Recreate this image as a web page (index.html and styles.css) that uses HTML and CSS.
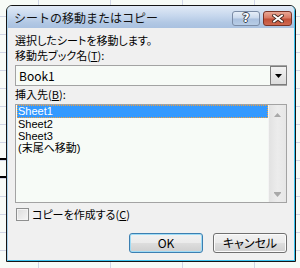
FILE: index.html
```html
<!DOCTYPE html>
<html>
	<head>
		<meta charset="UTF-8">
		<title>シートの移動またはコピー</title>
		<link rel="stylesheet" href="styles.css">
	</head>
	<body>
		<div class="cell-sel"></div>

		<div class="dialog">
			<div class="frame">
				<div class="titlebar">
					<span class="title">シートの移動またはコピー</span>
					<div class="caption-btns">
						<div class="cbtn help">?</div>
						<div class="cbtn close">
							<svg width="12" height="9" viewBox="0 0 12 9">
								<path d="M2 1.5 L10 7.5 M10 1.5 L2 7.5" stroke="#4a2a22" stroke-width="3.6" stroke-linecap="square"/>
								<path d="M2 1.5 L10 7.5 M10 1.5 L2 7.5" stroke="#fff" stroke-width="1.8" stroke-linecap="square"/>
							</svg>
						</div>
					</div>
				</div>

				<div class="client">
					<p class="msg">選択したシートを移動します。</p>
					<p class="label">移動先ブック名(<u>T</u>):</p>
					<div class="combo">
						<span class="combo-text">Book1</span>
						<div class="combo-btn">
							<svg width="7" height="4" viewBox="0 0 7 4"><path d="M0 0 H7 L3.5 4 Z" fill="#000"/></svg>
						</div>
					</div>

					<p class="label list-label">挿入先(<u>B</u>):</p>
					<div class="listbox">
						<ul class="items">
							<li class="sel">Sheet1</li>
							<li>Sheet2</li>
							<li>Sheet3</li>
							<li>(末尾へ移動)</li>
						</ul>
						<div class="vscroll">
							<svg width="7" height="4" viewBox="0 0 7 4"><path d="M3.5 0 L7 4 H0 Z" fill="#a8a8a8"/></svg>
							<svg width="7" height="5" viewBox="0 0 7 5"><path d="M0 0 H7 V1 H0 Z M0 1 H7 L3.5 5 Z" fill="#a8a8a8"/></svg>
						</div>
					</div>

					<div class="check">
						<span class="box"></span>
						<span>コピーを作成する(<u>C</u>)</span>
					</div>

					<div class="buttons">
						<div class="btn default">OK</div>
						<div class="btn">キャンセル</div>
					</div>
				</div>
			</div>
		</div>
	</body>
</html>
```

FILE: styles.css
```css
html,body{
	margin:0;
	padding:0;
}
body{
	width:300px;
	height:268px;
	overflow:hidden;
	position:relative;
	background-color:#f7fbf7;
	background-image:
		linear-gradient(to right, #d0d6e6 1px, transparent 1px),
		linear-gradient(to bottom, #d0d6e6 1px, transparent 1px);
	background-size:72px 100%, 100% 18px;
	background-position:38px 0, 0 16px;
	font-family:"Noto Sans CJK JP", sans-serif;
}
/* selected cell on the sheet behind */
.cell-sel{
	position:absolute;
	left:-40px;
	top:158px;
	width:60px;
	height:16px;
	border:2px solid #000;
}

.dialog{
	position:relative;
	z-index:1;
	margin:5px 0 0 6px;
	width:290px;
	height:257px;
	box-sizing:border-box;
	border:1px solid #151515;
	border-radius:6px 6px 0 0;
}
.frame{
	height:100%;
	box-sizing:border-box;
	border-left:1px solid #a9d4ec;
	border-right:1px solid #3ac2ee;
	border-bottom:1px solid #3ac2ee;
	border-radius:5px 5px 0 0;
	overflow:hidden;
	display:flex;
	flex-direction:column;
}

.titlebar{
	height:22px;
	flex:none;
	display:flex;
	align-items:center;
	justify-content:space-between;
	padding:0 2px 0 6px;
	background:linear-gradient(to bottom, #e1eaf6 0%, #c6d7ed 45%, #b2c8e4 75%, #a9c1e0 100%);
}
.title{
	font-size:12px;
	line-height:14px;
	color:#111;
	margin-top:1px;
}
.caption-btns{
	display:flex;
	gap:3px;
	margin-top:2px;
}
.cbtn{
	height:15px;
	box-sizing:border-box;
	border-radius:3px;
	display:flex;
	align-items:center;
	justify-content:center;
}
.help{
	width:28px;
	border:1px solid #7b8ca6;
	background:linear-gradient(to bottom, #e6eef8 0%, #c9d8ec 48%, #a9c0de 52%, #b8cde6 100%);
	color:#fff;
	font-family:"DejaVu Sans", sans-serif;
	font-weight:bold;
	font-size:12px;
	line-height:13px;
	text-shadow:1px 0 0 #3b4454, -1px 0 0 #3b4454, 0 1px 0 #3b4454, 0 -1px 0 #3b4454;
}
.close{
	width:29px;
	border:1px solid #7a3326;
	background:linear-gradient(to bottom, #e9a896 0%, #d97a64 45%, #c24f37 55%, #cf6a52 100%);
}

.client{
	flex:1;
	background:#f0f0f0;
	padding:5px 7px 0 7px;
	font-size:11px;
	font-feature-settings:"palt";
	color:#000;
}
.msg,
.label{
	margin:0;
	line-height:15px;
	white-space:nowrap;
}
.label u{
	text-underline-offset:1px;
}

.combo{
	margin-top:2px;
	height:21px;
	box-sizing:border-box;
	border:1px solid #a3a3a3;
	background:#f7fbf7;
	display:flex;
	align-items:center;
	justify-content:space-between;
	font-size:12px;
}
.combo-text{
	padding-left:3px;
	line-height:14px;
}
.combo-btn{
	width:17px;
	height:19px;
	box-sizing:border-box;
	margin-right:-1px;
	border:1px solid #7c7c7c;
	background:linear-gradient(to bottom, #f2f2f2, #dcdcdc);
	display:flex;
	align-items:center;
	justify-content:center;
}

.list-label{
	margin-top:1px;
	line-height:14px;
}
.listbox{
	margin-top:3px;
	height:99px;
	box-sizing:border-box;
	border:1px solid #a3a3a3;
	background:#f7fbf7;
	display:flex;
}
.items{
	flex:1;
	list-style:none;
	margin:0;
	padding:0 0 0 1px;
	font-family:"Liberation Sans", "Noto Sans CJK JP", sans-serif;
	font-size:11px;
}
.items li{
	height:12px;
	line-height:12px;
	padding-left:1px;
	white-space:nowrap;
}
.items .sel{
	height:13px;
	background:#3399ff;
	color:#fff;
	outline:1px dotted #f0a040;
	outline-offset:-1px;
}
.vscroll{
	width:17px;
	background:linear-gradient(to right, #e2e2e2, #ececec 50%, #e6e6e6);
	border-left:1px solid #f4f4f4;
	display:flex;
	flex-direction:column;
	align-items:center;
	justify-content:space-between;
	padding:8px 0 5px;
}

.check{
	margin-top:4px;
	display:flex;
	align-items:center;
	gap:3px;
	line-height:14px;
	white-space:nowrap;
}
.box{
	width:13px;
	height:13px;
	box-sizing:border-box;
	margin-left:1px;
	border:1px solid #8e8f8f;
	background:linear-gradient(135deg, #dcdcdc, #f6f6f6);
	box-shadow:inset 0 0 0 1px #f4f4f4;
}

.buttons{
	margin-top:12px;
	display:flex;
	justify-content:flex-end;
	gap:10px;
	font-size:12px;
}
.btn{
	width:74px;
	height:20px;
	box-sizing:border-box;
	border:1px solid #707070;
	border-radius:3px;
	background:linear-gradient(to bottom, #f2f2f2 0%, #ebebeb 48%, #dddddd 52%, #cfcfcf 100%);
	box-shadow:inset 0 0 0 1px #fbfbfb;
	display:flex;
	align-items:center;
	justify-content:center;
	line-height:14px;
}
.btn.default{
	border-color:#3c7fb1;
	box-shadow:inset 0 0 0 1px #9fdcf6;
}
```
